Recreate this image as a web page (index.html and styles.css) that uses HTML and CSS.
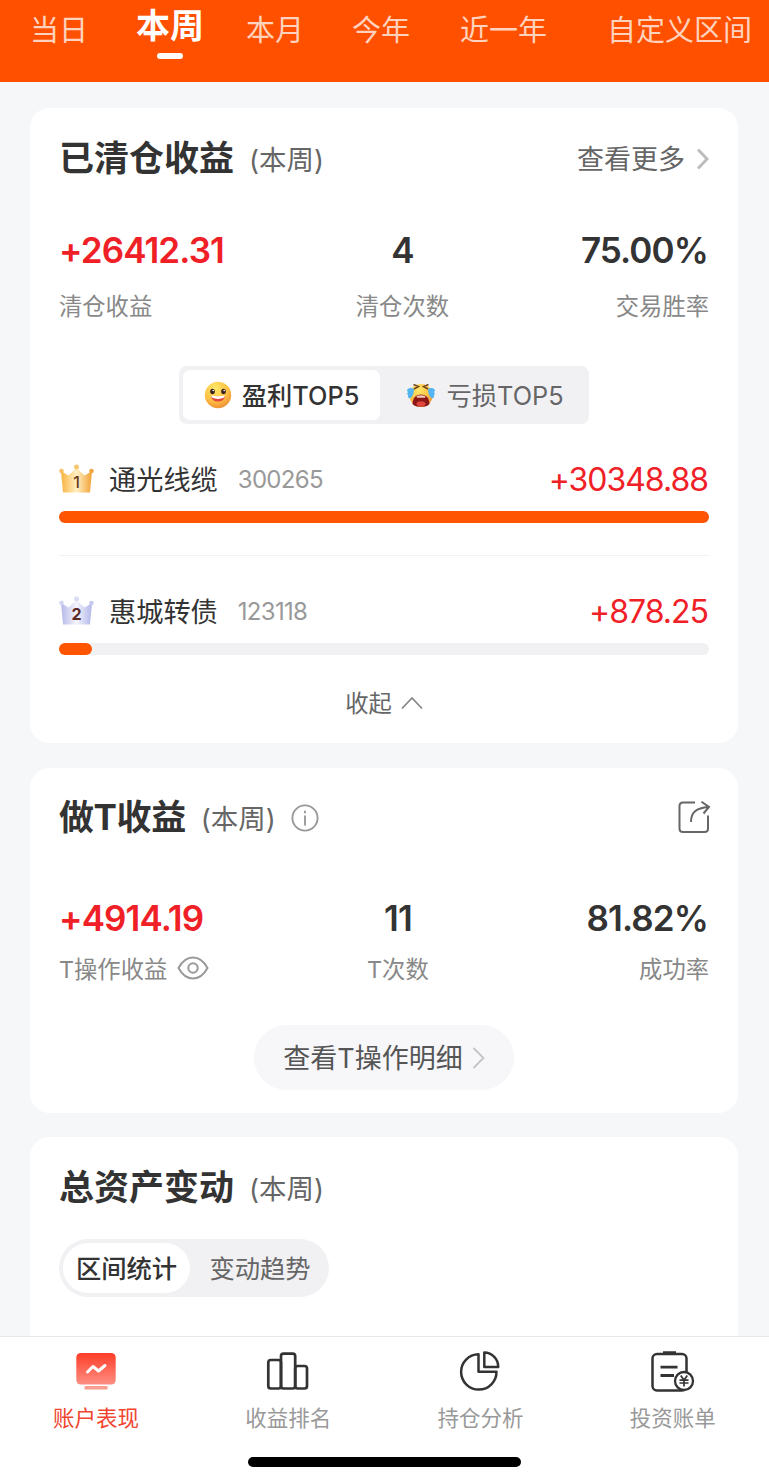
FILE: index.html
```html
<!DOCTYPE html>
<html lang="zh-CN">
<head>
    <meta charset="UTF-8">
    <meta name="viewport" content="width=device-width, initial-scale=1.0">
    <title>账户表现</title>
    <link rel="stylesheet" href="styles.css">
</head>
<body>
    <header class="periods">
        <a class="period">当日</a>
        <a class="period active">本周</a>
        <a class="period">本月</a>
        <a class="period">今年</a>
        <a class="period year">近一年</a>
        <a class="period custom">自定义区间</a>
    </header>

    <main>
        <!-- 已清仓收益 -->
        <section class="card cleared">
            <div class="card-head">
                <h2>已清仓收益</h2>
                <span class="range">(本周)</span>
                <a class="more"><span>查看更多</span>
                    <svg width="14" height="22" viewBox="0 0 14 22" fill="none" stroke="#bdbdbd" stroke-width="3"><path d="M3 1.5 12 11 3 20.5"/></svg>
                </a>
            </div>
            <div class="stats">
                <div class="stat">
                    <strong class="red">+26412.31</strong>
                    <span>清仓收益</span>
                </div>
                <div class="stat center">
                    <strong>4</strong>
                    <span>清仓次数</span>
                </div>
                <div class="stat right">
                    <strong>75.00%</strong>
                    <span>交易胜率</span>
                </div>
            </div>

            <div class="top-switch">
                <button class="top-tab selected">
                    <svg width="28" height="28" viewBox="0 0 28 28">
                        <defs>
                            <radialGradient id="face" cx=".4" cy=".25" r=".8">
                                <stop offset="0" stop-color="#ffe868"/>
                                <stop offset=".6" stop-color="#fdc043"/>
                                <stop offset="1" stop-color="#ee8a35"/>
                            </radialGradient>
                        </defs>
                        <circle cx="14" cy="14" r="13.2" fill="url(#face)"/>
                        <ellipse cx="8.5" cy="10.5" rx="2.3" ry="2.8" fill="#3b2320"/>
                        <ellipse cx="19.5" cy="10.5" rx="2.3" ry="2.8" fill="#3b2320"/>
                        <circle cx="9.2" cy="9.5" r=".8" fill="#fff"/>
                        <circle cx="20.2" cy="9.5" r=".8" fill="#fff"/>
                        <path d="M7 14.8q7 1.2 14 0q-.5 5.8-7 5.8t-7-5.8z" fill="#e3483c"/>
                        <path d="M7 14.6q7 1.2 14 0q-.3 3.300-7 3.300t-7-3.300z" fill="#fff"/>
                    </svg>
                    <span>盈利TOP5</span>
                </button>
                <button class="top-tab">
                    <svg width="30" height="26" viewBox="0 0 30 26">
                        <ellipse cx="15" cy="13.5" rx="11.5" ry="11.500" fill="url(#face)"/>
                        <path d="M7.500 2.500 12.500 4.500 8 7M22.500 2.500 17.500 4.500 22 7" fill="none" stroke="#71451f" stroke-width="1.500"/>
                        <path d="M8 7C4 5 1.500 6.500.8 9c2 .5 1 1.500 0 3 1.500 0 1 2 1.500 4 3 1 5.700-3 5.700-9zM22 7C26 5 28.500 6.500 29.200 9c-2 .5-1 1.500 0 3-1.500 0-1 2-1.500 4-3 1-5.700-3-5.700-9z" fill="#55b5f2"/>
                        <path d="M15 12.500c-5.500 0-8 3.500-8.500 9.500q2 2 4.500 2.500h8q2.500-.5 4.500-2.500c-.5-6-3-9.500-8.500-9.500z" fill="#8c1717"/>
                        <path d="M10.500 14.200q4.500-1.700 9 0l-.5 1.600h-8z" fill="#f0c9b8"/>
                        <ellipse cx="15" cy="21.800" rx="4.500" ry="2.500" fill="#e2453d"/>
                    </svg>
                    <span>亏损TOP5</span>
                </button>
            </div>

            <ul class="rank">
                <li>
                    <div class="rank-row">
                        <svg class="crown" width="36" height="30" viewBox="0 0 36 30">
                            <defs>
                                <linearGradient id="gold">
                                    <stop offset="0" stop-color="#f9b23f"/>
                                    <stop offset=".5" stop-color="#fff0c4"/>
                                    <stop offset="1" stop-color="#f3a134"/>
                                </linearGradient>
                            </defs>
                            <path d="M2 7 9.500 11.500 17.500 4 25.500 11.500 33 7 31 28.500H4z" fill="url(#gold)"/>
                            <circle cx="2.500" cy="7" r="2.300" fill="#f9bf63"/>
                            <circle cx="17.500" cy="3" r="2.500" fill="#f9c670"/>
                            <circle cx="32.500" cy="7" r="2.300" fill="#f2a53f"/>
                            <text x="17.500" y="23.500" text-anchor="middle">1</text>
                        </svg>
                        <span class="name">通光线缆</span>
                        <span class="code">300265</span>
                        <span class="amount">+30348.88</span>
                    </div>
                    <div class="bar"><div class="fill" style="width: 100%"></div></div>
                </li>
                <li>
                    <div class="rank-row">
                        <svg class="crown silver" width="36" height="30" viewBox="0 0 36 30">
                            <defs>
                                <linearGradient id="silver">
                                    <stop offset="0" stop-color="#b5b8e6"/>
                                    <stop offset=".5" stop-color="#f4f5fd"/>
                                    <stop offset="1" stop-color="#b2b6e8"/>
                                </linearGradient>
                            </defs>
                            <path d="M2 7 9.500 11.500 17.500 4 25.500 11.500 33 7 31 28.500H4z" fill="url(#silver)"/>
                            <circle cx="2.500" cy="7" r="2.300" fill="#d0d4f3"/>
                            <circle cx="17.500" cy="3" r="2.500" fill="#dadcf6"/>
                            <circle cx="32.500" cy="7" r="2.300" fill="#c6caf0"/>
                            <text x="17.500" y="23.500" text-anchor="middle">2</text>
                        </svg>
                        <span class="name">惠城转债</span>
                        <span class="code">123118</span>
                        <span class="amount">+878.25</span>
                    </div>
                    <div class="bar"><div class="fill" style="width: 5%"></div></div>
                </li>
            </ul>
            <a class="collapse"><span>收起</span>
                <svg width="22" height="14" viewBox="0 0 22 14" fill="none" stroke="#888" stroke-width="1.800"><path d="M1 12.500 11 2 21 12.500"/></svg>
            </a>
        </section>

        <!-- 做T收益 -->
        <section class="card t-profit">
            <div class="card-head">
                <h2>做T收益</h2>
                <span class="range">(本周)</span>
                <svg class="info" width="28" height="28" viewBox="0 0 28 28" fill="none" stroke="#999" stroke-width="1.900"><circle cx="14" cy="14" r="12.600"/><path d="M14 11.500V21.500M14 6.800V9.200"/></svg>
                <svg class="share" width="34" height="34" viewBox="0 0 34 34" fill="none" stroke="#666" stroke-width="2"><path d="M18 2.500H6Q2.500 2.500 2.500 6V28.500Q2.500 32 6 32H27.500Q31 32 31 28.500V15.500"/><path d="M14 22C14 12.500 19 8 31.500 7M24.500 1.800 32 7 26.500 13.500"/></svg>
            </div>
            <div class="stats">
                <div class="stat">
                    <strong class="red">+4914.19</strong>
                    <span>T操作收益
                        <svg width="32" height="24" viewBox="0 0 32 24" fill="none" stroke="#999" stroke-width="2"><path d="M1.500 12C5 5.500 10 1.500 16 1.500S27 5.500 30.500 12C27 18.500 22 22.500 16 22.500S5 18.500 1.500 12z"/><circle cx="16" cy="12" r="4.700"/></svg>
                    </span>
                </div>
                <div class="stat center">
                    <strong>11</strong>
                    <span>T次数</span>
                </div>
                <div class="stat right">
                    <strong>81.82%</strong>
                    <span>成功率</span>
                </div>
            </div>
            <a class="detail"><span>查看T操作明细</span>
                <svg width="13" height="22" viewBox="0 0 13 22" fill="none" stroke="#c4c4c4" stroke-width="1.800"><path d="M1.500 1 11.500 11 1.500 21"/></svg>
            </a>
        </section>

        <!-- 总资产变动 -->
        <section class="card assets">
            <div class="card-head">
                <h2>总资产变动</h2>
                <span class="range">(本周)</span>
            </div>
            <div class="pill-switch">
                <button class="pill selected">区间统计</button>
                <button class="pill">变动趋势</button>
            </div>
        </section>
    </main>

    <nav>
        <div class="nav-items">
            <a class="nav-item current">
                <svg width="44" height="44" viewBox="0 0 44 44">
                    <defs>
                        <linearGradient id="screen" x2="0" y2="1">
                            <stop offset="0" stop-color="#fe3d28"/>
                            <stop offset="1" stop-color="#fd8f83"/>
                        </linearGradient>
                    </defs>
                    <rect x="2.300" y="4" width="39.400" height="31.500" rx="4.500" fill="url(#screen)"/>
                    <rect x="10.300" y="37" width="23.500" height="3.600" rx="1.500" fill="#fa9d91"/>
                    <path d="M13.500 23 19 17.500 24.500 22 31 16.500" fill="none" stroke="#fff" stroke-width="3" stroke-linecap="round" stroke-linejoin="round"/>
                </svg>
                <span>账户表现</span>
            </a>
            <a class="nav-item">
                <svg width="44" height="44" viewBox="0 0 44 44" fill="none" stroke="#333" stroke-width="2.700">
                    <rect x="2.300" y="11" width="12.700" height="28.500" rx="2.500"/>
                    <rect x="15" y="4.700" width="14.200" height="34.800" rx="2.500"/>
                    <rect x="29.200" y="17" width="11.800" height="22.500" rx="2.500"/>
                </svg>
                <span>收益排名</span>
            </a>
            <a class="nav-item">
                <svg width="44" height="44" viewBox="0 0 44 44" fill="none" stroke="#333" stroke-width="2.500" stroke-linejoin="round">
                    <path d="M19.500 5.200A17.700 17.700 0 1 0 37.500 22.800H19.500z"/>
                    <path d="M25.300 3.500V18H39.200A14.200 14.200 0 0 0 25.300 3.500z"/>
                </svg>
                <span>持仓分析</span>
            </a>
            <a class="nav-item">
                <svg width="44" height="44" viewBox="0 0 44 44" fill="none" stroke="#333" stroke-width="2.500">
                    <rect x="1.500" y="5" width="34" height="36.500" rx="4.500"/>
                    <path d="M12 3.700H25M9.500 18.200H26.500M9.500 26.500H23" stroke-width="2.800"/>
                    <circle cx="33" cy="32" r="9" fill="#fff" stroke-width="2.300"/>
                    <path d="M29.700 26.500 33 31 36.300 26.500M28.500 31.200H37.500M28.500 34H37.500M33 31V37.500" stroke-width="1.700"/>
                </svg>
                <span>投资账单</span>
            </a>
        </div>
        <div class="home-indicator"></div>
    </nav>
</body>
</html>
```

FILE: styles.css
```css
* {
    margin: 0;
    padding: 0;
    box-sizing: border-box;
}

body {
    display: flex;
    flex-direction: column;
    height: 100vh;
    overflow: hidden;
    background-color: #f6f7f9;
    color: #333;
    font-family: Inter, 'Noto Sans CJK SC', sans-serif;
}

svg {
    display: block;
    flex-shrink: 0;
}

button {
    border: none;
    background: none;
    font-family: inherit;
    color: inherit;
}

/* Selector de periodo */
.periods {
    display: flex;
    flex-shrink: 0;
    gap: 48px;
    height: 82px;
    padding-left: 30px;
    background-color: #ff5000;
    white-space: nowrap;
}

.period {
    font-size: 29px;
    line-height: 62px;
    color: #ffd2bd;
}

.period.active {
    margin-right: -6px;
    font-size: 34px;
    font-weight: bold;
    line-height: 52px;
    color: #fff;
}

.period.active::after {
    content: '';
    display: block;
    width: 26px;
    height: 6px;
    margin: 1px auto 0;
    border-radius: 3px;
    background-color: #fff;
}

.period.year {
    margin-left: 2px;
}

.period.custom {
    margin-left: 12px;
}

/* Tarjetas */
main {
    flex: 1;
    min-height: 0;
    padding: 26px 31px 0 30px;
    overflow: hidden;
}

.card {
    padding: 30px 29px 0;
    margin-bottom: 25px;
    border-radius: 20px;
    background-color: #fff;
}

.card-head {
    display: flex;
    align-items: center;
    height: 42px;
    white-space: nowrap;
}

.card-head h2 {
    margin-bottom: 2px;
    font-size: 35px;
    line-height: 42px;
}

.range {
    margin-bottom: 3px;
    margin-left: 15px;
    font-size: 27.5px;
    color: #666;
}

.more {
    display: flex;
    align-items: center;
    gap: 10px;
    margin-left: auto;
    font-size: 27px;
    color: #666;
}

.more span,
.collapse span,
.detail span,
.top-tab span {
    margin-bottom: 3px;
}

.stats {
    display: flex;
    justify-content: space-between;
    margin-top: 49px;
}

.stat {
    display: flex;
    flex-direction: column;
    gap: 18px;
}

.stat.center {
    align-items: center;
}

.stat.right {
    align-items: flex-end;
}

.stat strong {
    font-size: 35px;
    font-weight: 600;
    line-height: 42px;
    letter-spacing: -0.9px;
}

.stat.right strong {
    margin-right: 1px;
}

.stat span {
    display: flex;
    align-items: center;
    gap: 10px;
    height: 32px;
    font-size: 23.3px;
    color: #888;
}

.stat .red {
    color: #f02027;
}

.cleared {
    height: 635px;
}

.top-switch {
    display: flex;
    width: 410px;
    height: 58px;
    padding: 4px;
    margin: 45px auto 0;
    border-radius: 8px;
    background-color: #f1f1f4;
}

.top-tab {
    display: flex;
    flex: 1;
    align-items: center;
    justify-content: center;
    gap: 10px;
    padding-left: 5px;
    border-radius: 7px;
    font-size: 25.3px;
    color: #666;
}

.top-tab.selected {
    flex: 0 0 197px;
    padding-left: 0;
    background-color: #fff;
    font-weight: 500;
    color: #333;
}

/* Ranking de ganancias */
.rank {
    margin-top: 34px;
    list-style: none;
}

.rank li + li {
    margin-top: 32px;
    padding-top: 34px;
    border-top: 1px solid #f2f2f2;
}

.rank-row {
    display: flex;
    align-items: center;
    height: 42px;
}

.crown text {
    font-size: 16px;
    font-weight: 500;
    fill: #6b3a1e;
}

.crown.silver text {
    font-weight: bold;
    fill: #5a2a26;
}

.name {
    margin-bottom: 3px;
    margin-left: 14px;
    font-size: 27.2px;
}

.code {
    margin-left: 20px;
    font-size: 24px;
    letter-spacing: -0.7px;
    color: #999;
}

.amount {
    margin-right: 1px;
    margin-left: auto;
    font-size: 32px;
    letter-spacing: -1px;
    color: #f02027;
}

.bar {
    height: 12px;
    margin-top: 11px;
    border-radius: 6px;
    background-color: #f1f1f4;
}

.fill {
    height: 12px;
    border-radius: 6px;
    background-color: #ff5500;
}

.collapse {
    display: flex;
    align-items: center;
    justify-content: center;
    gap: 9px;
    height: 34px;
    margin-top: 31px;
    font-size: 23.3px;
    color: #666;
}

/* Ganancias T */
.t-profit {
    height: 345px;
    margin-bottom: 24px;
    padding-top: 29px;
}

.t-profit .card-head h2 {
    letter-spacing: -0.4px;
}

.t-profit .stats {
    margin-top: 58px;
}

.t-profit .stat {
    gap: 13px;
}

.info {
    margin-bottom: 1px;
    margin-left: 15px;
}

.share {
    margin-right: -2px;
    margin-bottom: 2px;
    margin-left: auto;
}

.detail {
    display: flex;
    align-items: center;
    justify-content: center;
    gap: 9px;
    width: 260px;
    height: 65px;
    margin: 41px auto 0;
    border-radius: 33px;
    background-color: #f7f7fa;
    font-size: 27px;
    color: #555;
}

.assets {
    height: 400px;
}

.pill-switch {
    display: flex;
    width: 270px;
    height: 58px;
    padding: 4px;
    margin-top: 30px;
    border-radius: 29px;
    background-color: #f1f1f4;
}

.pill {
    flex: 1;
    padding: 0 0 2px 5px;
    border-radius: 25px;
    font-size: 25.3px;
    color: #666;
    white-space: nowrap;
}

.pill.selected {
    flex: 0 0 127px;
    padding-left: 0;
    background-color: #fff;
    font-weight: 500;
    color: #333;
}

/* Barra inferior */
nav {
    flex-shrink: 0;
    height: 148px;
    border-top: 1px solid #e8e8ea;
    background-color: #fff;
}

.nav-items {
    display: flex;
    height: 120px;
}

.nav-item {
    display: flex;
    flex: 1;
    flex-direction: column;
    align-items: center;
    padding-top: 12px;
    font-size: 21.5px;
    color: #999;
}

.nav-item span {
    margin-top: 9px;
    line-height: 32px;
}

.nav-item.current {
    color: #f04530;
}

.home-indicator {
    width: 273px;
    height: 10px;
    margin: 0 auto;
    border-radius: 5px;
    background-color: #000;
}
```
